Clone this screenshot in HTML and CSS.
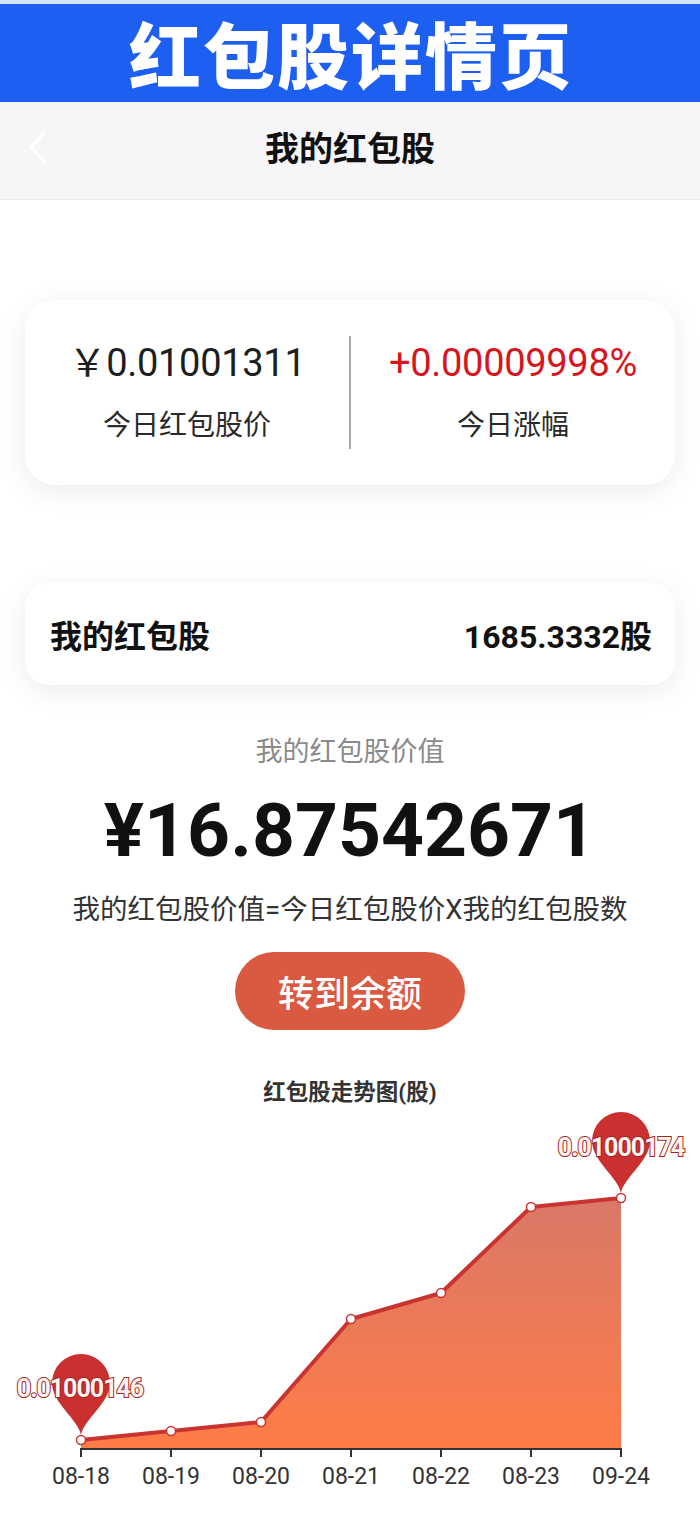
FILE: index.html
```html
<!DOCTYPE html>
<html lang="zh">
<head>
<meta charset="utf-8">
<title>红包股详情页</title>
<link rel="stylesheet" href="styles.css">
</head>
<body>
<header class="banner">红包股详情页</header>
<nav class="navbar">
  <svg class="back" width="20" height="34" viewBox="0 0 20 34"><path d="M16 3 L3 17 L16 31" fill="none" stroke="#fff" stroke-width="3" stroke-linecap="round" stroke-linejoin="round"/></svg>
  <div class="nav-title">我的红包股</div>
</nav>
<main class="main">
  <section class="card price-card">
    <div class="col">
      <div class="num">￥0.01001311</div>
      <div class="lbl">今日红包股价</div>
    </div>
    <div class="divider"></div>
    <div class="col">
      <div class="num red">+0.00009998%</div>
      <div class="lbl">今日涨幅</div>
    </div>
  </section>
  <section class="card hold-card">
    <div class="hold-name">我的红包股</div>
    <div class="hold-val">1685.3332股</div>
  </section>
  <div class="value-label">我的红包股价值</div>
  <div class="value-big">¥16.87542671</div>
  <div class="formula">我的红包股价值=今日红包股价X我的红包股数</div>
  <button class="btn">转到余额</button>
  <div class="chart-title">红包股走势图(股)</div>
  <svg class="chart" width="700" height="413" viewBox="0 1107 700 413">
    <defs>
      <linearGradient id="area" x1="0" y1="1198" x2="0" y2="1449" gradientUnits="userSpaceOnUse">
        <stop offset="0" stop-color="#d97868"/>
        <stop offset="1" stop-color="#ff7c47"/>
      </linearGradient>
    </defs>
    <path d="M81 1440 L171 1431 L261 1422 L351 1319 L441 1293 L531 1207 L621 1198 L621 1449 L81 1449 Z" fill="url(#area)"/>
    <polyline points="81,1440 171,1431 261,1422 351,1319 441,1293 531,1207 621,1198" fill="none" stroke="#c93430" stroke-width="4" stroke-linejoin="round"/>
    <g fill="#fff" stroke="#c93430" stroke-width="1.5">
      <circle cx="81" cy="1440" r="4.5"/>
      <circle cx="171" cy="1431" r="4.5"/>
      <circle cx="261" cy="1422" r="4.5"/>
      <circle cx="351" cy="1319" r="4.5"/>
      <circle cx="441" cy="1293" r="4.5"/>
      <circle cx="531" cy="1207" r="4.5"/>
      <circle cx="621" cy="1198" r="4.5"/>
    </g>
    <g stroke="#333" stroke-width="2">
      <line x1="80" y1="1449" x2="622" y2="1449"/>
      <line x1="81" y1="1449" x2="81" y2="1457"/>
      <line x1="171" y1="1449" x2="171" y2="1457"/>
      <line x1="261" y1="1449" x2="261" y2="1457"/>
      <line x1="351" y1="1449" x2="351" y2="1457"/>
      <line x1="441" y1="1449" x2="441" y2="1457"/>
      <line x1="531" y1="1449" x2="531" y2="1457"/>
      <line x1="621" y1="1449" x2="621" y2="1457"/>
    </g>
    <g class="axis-lbl" text-anchor="middle">
      <text x="81" y="1484">08-18</text>
      <text x="171" y="1484">08-19</text>
      <text x="261" y="1484">08-20</text>
      <text x="351" y="1484">08-21</text>
      <text x="441" y="1484">08-22</text>
      <text x="531" y="1484">08-23</text>
      <text x="621" y="1484">09-24</text>
    </g>
    <path transform="translate(81 1383)" d="M0 52 C-3 36 -29 20 -29 0 A29 29 0 1 1 29 0 C29 20 3 36 0 52 Z" fill="#c9302f"/>
    <path transform="translate(621 1141)" d="M0 52 C-3 36 -29 20 -29 0 A29 29 0 1 1 29 0 C29 20 3 36 0 52 Z" fill="#c9302f"/>
    <text class="pin-lbl" x="80" y="1397" text-anchor="middle">0.01000146</text>
    <text class="pin-lbl" x="621" y="1156" text-anchor="middle">0.01000174</text>
  </svg>
</main>
</body>
</html>
```

FILE: styles.css
```css
* { box-sizing: border-box; }
html, body { margin: 0; padding: 0; }
body {
  width: 700px;
  height: 1520px;
  overflow: hidden;
  background: #fff;
  font-family: Roboto, "Noto Sans CJK SC", sans-serif;
  color: #222;
}
.banner {
  height: 102px;
  border-top: 4px solid #d3e4fb;
  background: #1d5ff0;
  color: #fff;
  font-family: "Noto Sans CJK SC", sans-serif;
  font-weight: 900;
  font-size: 72px;
  letter-spacing: 2px;
  line-height: 96px;
  text-align: center;
  padding-left: 2px;
}
.navbar {
  height: 98px;
  background: #f6f6f8;
  border-bottom: 1px solid #ececec;
  display: flex;
  align-items: center;
  justify-content: center;
  position: relative;
  padding-bottom: 8px;
}
.back {
  position: absolute;
  left: 28px;
  top: 28px;
}
.nav-title {
  font-family: "Noto Sans CJK SC", sans-serif;
  font-weight: 700;
  font-size: 34px;
  color: #111;
}
.main {
  display: flex;
  flex-direction: column;
  align-items: center;
}
.card {
  width: 650px;
  background: #fff;
  box-shadow: 0 6px 28px rgba(0, 0, 0, 0.08);
}
.price-card {
  margin-top: 100px;
  height: 185px;
  border-radius: 30px;
  display: flex;
  align-items: center;
}
.col {
  flex: 1;
  display: flex;
  flex-direction: column;
  align-items: center;
}
.num {
  font-size: 38px;
  line-height: 48px;
  color: #1e1e1e;
  letter-spacing: -0.3px;
}
.num.red { color: #d7151c; }
.lbl {
  margin-top: 19px;
  font-size: 28px;
  line-height: 40px;
  color: #2a2a2a;
}
.divider {
  width: 2px;
  height: 113px;
  background: #a8a8a8;
}
.hold-card {
  margin-top: 98px;
  height: 102px;
  border-radius: 24px;
  display: flex;
  align-items: center;
  justify-content: space-between;
  padding: 0 23px 0 25px;
  font-weight: 700;
  font-size: 32px;
  color: #111;
}
.value-label {
  margin-top: 49px;
  font-size: 27px;
  line-height: 36px;
  color: #8a8a8a;
}
.value-big {
  margin-top: 15px;
  font-size: 75px;
  line-height: 90px;
  font-weight: 700;
  color: #111;
}
.formula {
  margin-top: 17px;
  font-size: 27.5px;
  line-height: 36px;
  color: #333;
}
.btn {
  margin-top: 24px;
  width: 230px;
  height: 78px;
  border: none;
  border-radius: 39px;
  background: #d95a40;
  color: #fff;
  font-family: "Noto Sans CJK SC", sans-serif;
  font-size: 36px;
  font-weight: 500;
  padding: 0;
}
.chart-title {
  margin-top: 47px;
  font-size: 22.5px;
  line-height: 30px;
  font-weight: 700;
  color: #333;
}
.chart { display: block; }
.axis-lbl {
  font-family: Roboto, sans-serif;
  font-size: 23px;
  fill: #333;
}
.pin-lbl {
  font-family: Roboto, sans-serif;
  font-size: 25px;
  font-weight: 700;
  fill: #fff3f1;
  stroke: #9e2a28;
  stroke-width: 2px;
  paint-order: stroke;
  letter-spacing: -1px;
}
```
